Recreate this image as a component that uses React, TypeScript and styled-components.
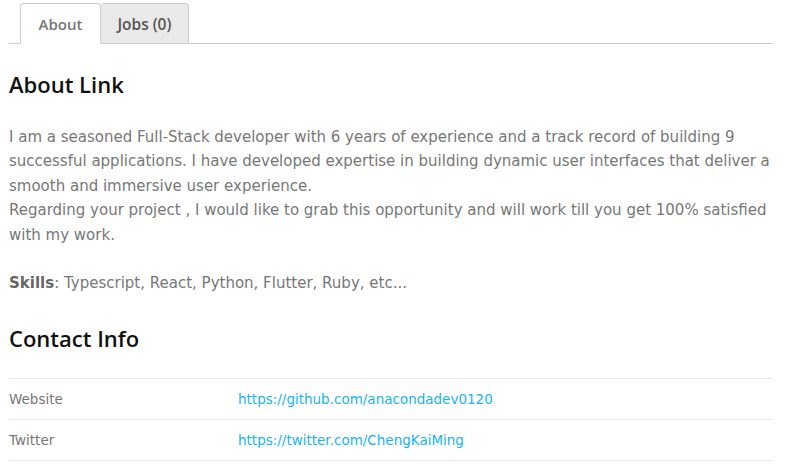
import React from "react";
import styled, { createGlobalStyle } from "styled-components";

const Global = createGlobalStyle`
  html, body { margin: 0; padding: 0; background: #fff; }
  body { font-family: "DejaVu Sans", "Noto Sans", sans-serif; }
  * { box-sizing: border-box; }
`;

const Page = styled.div`
  width: 773px;
  padding: 3px 0 0 9px;
`;

const TabBar = styled.ul`
  display: flex;
  list-style: none;
  margin: 0;
  padding: 0 0 0 11px;
  border-bottom: 1px solid #ccc;
`;

const Tab = styled.li<{ $active?: boolean }>`
  height: 41px;
  margin-bottom: -1px;
  padding: 0 ${(p) => (p.$active ? 17.5 : 16.5)}px;
  display: flex;
  align-items: center;
  font-family: "Open Sans", sans-serif;
  font-size: ${(p) => (p.$active ? 15 : 15.5)}px;
  font-weight: 600;
  color: ${(p) => (p.$active ? "#777" : "#555")};
  background: ${(p) => (p.$active ? "#fff" : "#e9e9e9")};
  border: 1px solid #ccc;
  border-bottom-color: ${(p) => (p.$active ? "#fff" : "#ccc")};
  border-radius: 4px 4px 0 0;
  & + & { border-left: none; }
`;

const Heading = styled.h2<{ $top: number }>`
  margin: ${(p) => p.$top}px 0 0;
  font-family: "Open Sans", sans-serif;
  font-size: 22px;
  font-weight: 600;
  color: #111;
  line-height: 30px;
`;

const Paragraph = styled.p`
  margin: 26px 0 0;
  font-size: 15px;
  line-height: 24.4px;
  color: #777;
`;

const Strong = styled.b`
  font-weight: 600;
  color: #666;
`;

const Table = styled.div`
  margin-top: 25px;
  border-top: 1px solid #e6e6e6;
`;

const Row = styled.div`
  display: grid;
  grid-template-columns: 229px 1fr;
  height: 41px;
  align-items: center;
  border-bottom: 1px solid #e6e6e6;
  font-size: 13.5px;
`;

const Label = styled.span`
  color: #777;
`;

const Link = styled.a`
  color: #17b4f0;
  text-decoration: none;
`;

export default function App() {
  return (
    <>
      <Global />
      <Page>
        <TabBar>
          <Tab $active>About</Tab>
          <Tab>Jobs (0)</Tab>
        </TabBar>
        <Heading $top={25}>About Link</Heading>
        <Paragraph>
          I am a seasoned Full-Stack developer with 6 years of experience and a track record of building 9 successful applications. I have developed expertise in building dynamic user interfaces that deliver a smooth and immersive user experience.
          <br />
          Regarding your project , I would like to grab this opportunity and will work till you get 100% satisfied with my work.
          <br />
          <br />
          <Strong>Skills</Strong>: Typescript, React, Python, Flutter, Ruby, etc...
        </Paragraph>
        <Heading $top={27}>Contact Info</Heading>
        <Table>
          <Row>
            <Label>Website</Label>
            <Link href="#">https://github.com/anacondadev0120</Link>
          </Row>
          <Row>
            <Label>Twitter</Label>
            <Link href="#">https://twitter.com/ChengKaiMing</Link>
          </Row>
        </Table>
      </Page>
    </>
  );
}
